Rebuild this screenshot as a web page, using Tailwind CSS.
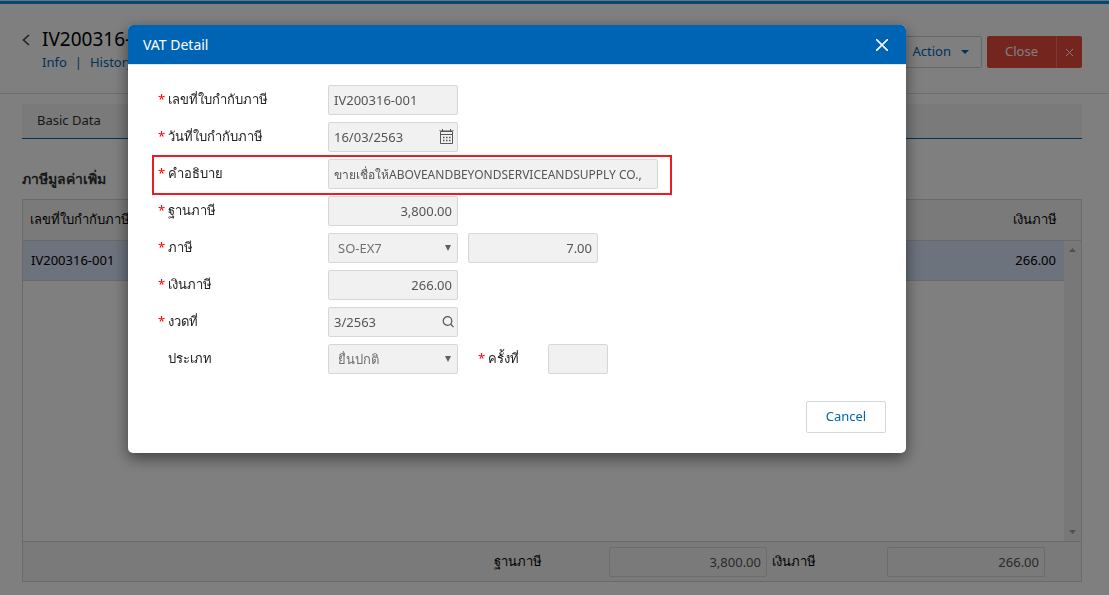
<!DOCTYPE html>
<html lang="th">
<head>
    <meta charset="UTF-8">
    <meta name="viewport" content="width=device-width, initial-scale=1.0">
    <title>VAT Detail</title>
    <script src="https://cdn.jsdelivr.net/npm/@tailwindcss/browser@4"></script>
</head>
<body class="bg-white min-h-screen font-['Noto_Sans',sans-serif] text-[13px] text-[#333333]">

    <!-- Page -->
    <div class="border-t border-[#e0e0e0]">
        <div class="h-[3px] bg-[#0a90f0]"></div>

        <!-- Page header -->
        <header class="flex justify-between items-start h-[90px] px-[22px] border-b border-[#dcdcdc]">
            <div class="flex">
                <button type="button" aria-label="Back" class="mt-7 w-5 h-4">
                    <svg class="block w-2 h-3" viewBox="0 0 8 12" fill="none" stroke="#444444" stroke-width="1.6"><path d="M7 1 1.500 6 7 11"/></svg>
                </button>
                <div class="pt-[22px]">
                    <h1 class="text-[19px] leading-[26px] text-black">IV200316-001</h1>
                    <nav class="flex gap-2 text-[13px] leading-5 text-[#0064b5]">
                        <a href="#">Info</a>
                        <span>|</span>
                        <a href="#">History</a>
                    </nav>
                </div>
            </div>
            <div class="flex mt-8 mr-[5px] h-8">
                <button type="button" class="flex items-center gap-2.5 px-3 mr-[5px] border border-[#cfcfcf] rounded-[2px] text-[#0064b5]">
                    Action
                    <svg class="w-2 h-1" viewBox="0 0 8 4" fill="currentColor"><path d="M0 0h8L4 4z"/></svg>
                </button>
                <button type="button" class="w-[69px] bg-[#e84c3d] text-white rounded-l-[2px]">Close</button>
                <button type="button" aria-label="Close options" class="flex items-center justify-center w-[26px] bg-[#e84c3d] border-l border-[#f0786c] rounded-r-[2px]">
                    <svg class="w-[7px] h-[7px]" viewBox="0 0 7 7" stroke="#ffffff" stroke-width="1"><path d="m0 0 7 7M7 0 0 7"/></svg>
                </button>
            </div>
        </header>

        <main class="pl-[22px] pr-[27px] pt-2.5">
            <div class="flex h-[35px] bg-[#f4f4f4] border-b border-[#0064b5]">
                <button type="button" class="px-[15px]">Basic Data</button>
            </div>

            <h2 class="pt-7 h-[60px] text-[14px] font-bold leading-6">ภาษีมูลค่าเพิ่ม</h2>

            <div class="border border-[#d4d4d4] text-black">
                <table class="w-full border-separate border-spacing-0">
                    <thead>
                        <tr class="h-[41px] bg-[#f4f4f4]">
                            <th class="border-b border-[#d4d4d4] px-[7px] text-left font-normal">เลขที่ใบกำกับภาษี</th>
                            <th class="border-b border-[#d4d4d4] px-[7px] text-right font-normal">เงินภาษี</th>
                            <th class="border-b border-[#d4d4d4] w-[17px]"></th>
                        </tr>
                    </thead>
                    <tbody>
                        <tr class="h-10">
                            <td class="border-b border-[#d4d4d4] bg-[#d8e6fa] px-2">IV200316-001</td>
                            <td class="border-b border-[#d4d4d4] bg-[#d8e6fa] px-2 text-right">266.00</td>
                            <td rowspan="2" class="p-0 h-[300px] bg-[#f0f0f0]">
                                <div class="flex flex-col justify-between items-center h-[286px]">
                                    <svg class="w-[7px] h-1" viewBox="0 0 7 4" fill="#a0a0a0"><path d="M0 4h7L3.500 0z"/></svg>
                                    <svg class="w-[7px] h-1" viewBox="0 0 7 4" fill="#a0a0a0"><path d="M0 0h7L3.500 4z"/></svg>
                                </div>
                            </td>
                        </tr>
                        <tr class="h-[260px]"><td colspan="2"></td></tr>
                    </tbody>
                </table>
                <div class="flex justify-end items-center h-10 pr-9 bg-[#f4f4f4] border-t border-[#d4d4d4]">
                    <label for="total_base" class="w-[120px] pl-[5px]">ฐานภาษี</label>
                    <input id="total_base" type="text" value="3,800.00" class="w-[158px] h-[30px] px-[5px] border border-[#d8d8d8] rounded-[2px] text-right text-[#555555]">
                    <label for="total_tax" class="w-[120px] pl-[5px]">เงินภาษี</label>
                    <input id="total_tax" type="text" value="266.00" class="w-[158px] h-[30px] px-[5px] border border-[#d8d8d8] rounded-[2px] text-right text-[#555555]">
                </div>
            </div>
        </main>
    </div>

    <!-- Modal -->
    <div class="fixed inset-0 bg-black/50 flex items-start pt-[25px] pl-32">
        <div role="dialog" aria-labelledby="modal_title" class="w-[778px] bg-white rounded-[5px] shadow-[0_5px_15px_rgba(0,0,0,0.5)] overflow-hidden">
            <div class="flex justify-between items-center h-[39px] pl-[15px] pr-[18px] bg-[#0064b5] text-white">
                <h2 id="modal_title" class="text-[14px]">VAT Detail</h2>
                <button type="button" aria-label="Close">
                    <svg class="block w-3 h-3" viewBox="0 0 12 12" stroke="currentColor" stroke-width="1.6"><path d="m0 0 12 12M12 0 0 12"/></svg>
                </button>
            </div>

            <form class="pl-6 pr-5 pt-5 pb-5 border-t border-[#e5e5e5] text-[#555555]">
                <div class="flex flex-col gap-[7px]">
                    <div class="flex">
                        <label for="vat_no" class="flex w-44 leading-7 text-[#222222]"><span class="w-4 pl-1.5 text-[#ff0000]">*</span>เลขที่ใบกำกับภาษี</label>
                        <input id="vat_no" type="text" value="IV200316-001" class="w-[130px] h-[30px] px-[5px] bg-[#f1f1f1] border border-[#d6d6d6] rounded-[2px]">
                    </div>
                    <div class="flex">
                        <label for="vat_date" class="flex w-44 leading-7 text-[#222222]"><span class="w-4 pl-1.5 text-[#ff0000]">*</span>วันที่ใบกำกับภาษี</label>
                        <div class="relative">
                            <input id="vat_date" type="text" value="16/03/2563" class="w-[130px] h-[30px] px-[5px] bg-[#f1f1f1] border border-[#d6d6d6] rounded-[2px]">
                            <svg class="absolute right-1 top-[7px] w-[15px] h-[15px]" viewBox="0 0 15 15" fill="none" stroke="#555555"><path d="M1.500 2.500h12v12h-12zM1.500 5.500h12M3.500 0v3M11.500 0v3"/><path d="M0 1.500h15" stroke-width=".5"/><path d="M4 8.500h8M4 11.500h8" stroke-width="1.500" stroke-dasharray="1.500 1.500"/></svg>
                        </div>
                    </div>
                    <div class="relative flex">
                        <label for="vat_desc" class="flex w-44 leading-7 text-[#222222]"><span class="w-4 pl-1.5 text-[#ff0000]">*</span>คำอธิบาย</label>
                        <input id="vat_desc" type="text" value="ขายเชื่อให้ABOVEANDBEYONDSERVICEANDSUPPLY CO.," class="w-[330px] h-[30px] px-[5px] bg-[#f1f1f1] border border-[#d6d6d6] rounded-[2px] text-[12px]">
                        <div class="absolute left-0 -top-1 w-[520px] h-10 border-2 border-[#ed1c24] pointer-events-none"></div>
                    </div>
                    <div class="flex">
                        <label for="vat_base" class="flex w-44 leading-7 text-[#222222]"><span class="w-4 pl-1.5 text-[#ff0000]">*</span>ฐานภาษี</label>
                        <input id="vat_base" type="text" value="3,800.00" class="w-[130px] h-[30px] px-[5px] bg-[#f1f1f1] border border-[#d6d6d6] rounded-[2px] text-right">
                    </div>
                    <div class="flex">
                        <label for="vat_code" class="flex w-44 leading-7 text-[#222222]"><span class="w-4 pl-1.5 text-[#ff0000]">*</span>ภาษี</label>
                        <div class="relative">
                            <select id="vat_code" class="appearance-none w-[130px] h-[30px] pl-[9px] pt-px bg-[#f1f1f1] border border-[#d6d6d6] rounded-[2px] text-[#707070]">
                                <option>SO-EX7</option>
                            </select>
                            <svg class="absolute right-[7px] top-3 w-1.5 h-1.5 pointer-events-none" viewBox="0 0 6 6" fill="#606060"><path d="M0 0h6L3 6z"/></svg>
                        </div>
                        <input id="vat_rate" aria-label="อัตราภาษี" type="text" value="7.00" class="ml-2.5 w-[130px] h-[30px] px-[5px] bg-[#f1f1f1] border border-[#d6d6d6] rounded-[2px] text-right">
                    </div>
                    <div class="flex">
                        <label for="vat_amount" class="flex w-44 leading-7 text-[#222222]"><span class="w-4 pl-1.5 text-[#ff0000]">*</span>เงินภาษี</label>
                        <input id="vat_amount" type="text" value="266.00" class="w-[130px] h-[30px] px-[5px] bg-[#f1f1f1] border border-[#d6d6d6] rounded-[2px] text-right">
                    </div>
                    <div class="flex">
                        <label for="vat_period" class="flex w-44 leading-7 text-[#222222]"><span class="w-4 pl-1.5 text-[#ff0000]">*</span>งวดที่</label>
                        <div class="relative">
                            <input id="vat_period" type="text" value="3/2563" class="w-[130px] h-[30px] px-[5px] bg-[#f1f1f1] border border-[#d6d6d6] rounded-[2px]">
                            <svg class="absolute right-1 top-[9px] w-3 h-3" viewBox="0 0 12 12" fill="none" stroke="#555555" stroke-width="1.200"><circle cx="5.500" cy="5" r="4.300"/><path d="m8.500 8 3 3.200"/></svg>
                        </div>
                    </div>
                    <div class="flex">
                        <label for="vat_type" class="w-44 pl-4 leading-7 text-[#222222]">ประเภท</label>
                        <div class="relative">
                            <select id="vat_type" class="appearance-none w-[130px] h-[30px] pl-[9px] pt-px bg-[#f1f1f1] border border-[#d6d6d6] rounded-[2px] text-[#707070]">
                                <option>ยื่นปกติ</option>
                            </select>
                            <svg class="absolute right-[7px] top-3 w-1.5 h-1.5 pointer-events-none" viewBox="0 0 6 6" fill="#606060"><path d="M0 0h6L3 6z"/></svg>
                        </div>
                        <label for="vat_round" class="flex w-[90px] pl-3.5 leading-7 text-[#222222]"><span class="w-4 pl-1.5 text-[#ff0000]">*</span>ครั้งที่</label>
                        <input id="vat_round" type="text" class="w-[60px] h-[30px] px-[5px] bg-[#f1f1f1] border border-[#d6d6d6] rounded-[2px]">
                    </div>
                </div>

                <div class="flex justify-end mt-[27px]">
                    <button type="button" class="w-20 h-8 border border-[#d6d6d6] rounded-[2px] text-[#0064b5]">Cancel</button>
                </div>
            </form>
        </div>
    </div>

</body>
</html>
